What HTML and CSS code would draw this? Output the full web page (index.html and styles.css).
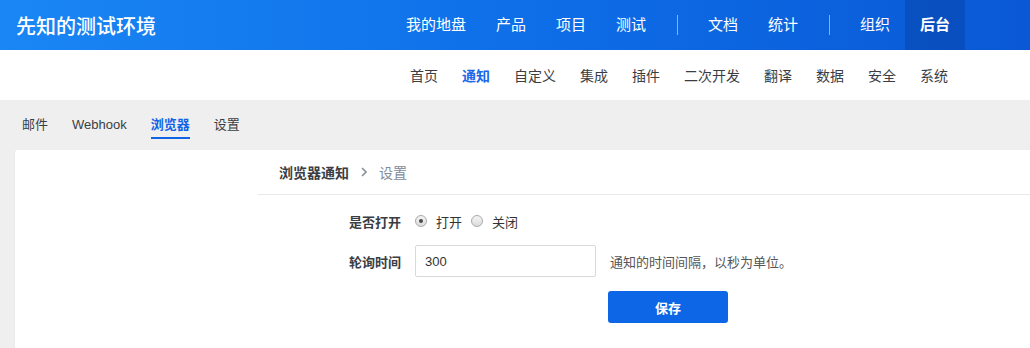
FILE: index.html
```html
<!DOCTYPE html>
<html lang="zh-CN">
<head>
    <meta charset="UTF-8">
    <meta name="viewport" content="width=device-width, initial-scale=1.0">
    <title>先知的测试环境 - 后台</title>
    <link rel="stylesheet" href="styles.css">
</head>
<body>
    <div class="header">
        <div class="brand">先知的测试环境</div>
        <div class="main-nav">
            <a class="nav-item">我的地盘</a>
            <a class="nav-item">产品</a>
            <a class="nav-item">项目</a>
            <a class="nav-item">测试</a>
            <span class="nav-divider"></span>
            <a class="nav-item">文档</a>
            <a class="nav-item">统计</a>
            <span class="nav-divider"></span>
            <a class="nav-item">组织</a>
            <a class="nav-item active">后台</a>
        </div>
    </div>

    <div class="sub-nav">
        <a>首页</a>
        <a class="active">通知</a>
        <a>自定义</a>
        <a>集成</a>
        <a>插件</a>
        <a>二次开发</a>
        <a>翻译</a>
        <a>数据</a>
        <a>安全</a>
        <a>系统</a>
    </div>

    <div class="main">
        <div class="tabs">
            <a class="tab">邮件</a>
            <a class="tab">Webhook</a>
            <a class="tab active">浏览器</a>
            <a class="tab">设置</a>
        </div>

        <div class="card">
            <div class="side"></div>
            <div class="content">
                <div class="breadcrumb">
                    <strong>浏览器通知</strong>
                    <svg class="chevron" width="6" height="10" viewBox="0 0 6 10">
                        <path d="M1 1 L5 5 L1 9" fill="none" stroke="#8a909c" stroke-width="1.6"/>
                    </svg>
                    <span class="crumb-current">设置</span>
                </div>

                <form class="settings-form">
                    <div class="form-row">
                        <label class="form-label">是否打开</label>
                        <div class="radio-group">
                            <label class="radio"><input type="radio" name="turnon" checked> 打开</label>
                            <label class="radio"><input type="radio" name="turnon"> 关闭</label>
                        </div>
                    </div>
                    <div class="form-row">
                        <label class="form-label" for="polling">轮询时间</label>
                        <div class="field">
                            <input type="text" id="polling" value="300">
                            <span class="help">通知的时间间隔，以秒为单位。</span>
                        </div>
                    </div>
                    <div class="form-row actions">
                        <span></span>
                        <button type="button" class="btn-save">保存</button>
                    </div>
                </form>
            </div>
        </div>
    </div>
</body>
</html>
```

FILE: styles.css
```css
body {
    margin: 0;
    font-family: "Liberation Sans", "Noto Sans CJK SC", sans-serif;
    font-size: 13px;
    color: #333;
    background-color: #efefef;
    overflow: hidden;
}

a {
    text-decoration: none;
    color: inherit;
    cursor: pointer;
}

.header {
    height: 50px;
    display: flex;
    align-items: center;
    background: linear-gradient(90deg, #1a86f4 0%, #0e6fe8 50%, #0a58d5 100%);
    color: white;
}

.brand {
    padding-left: 16px;
    font-size: 20px;
    font-weight: 500;
}

.main-nav {
    margin-left: auto;
    margin-right: 65px;
    display: flex;
    align-items: center;
    height: 50px;
}

.nav-item {
    padding: 0 15px;
    height: 50px;
    line-height: 50px;
    font-size: 15px;
}

.nav-item.active {
    background-color: rgba(0, 20, 80, 0.18);
    font-weight: bold;
}

.nav-divider {
    width: 1px;
    height: 20px;
    margin: 0 15px 0 16px;
    background-color: rgba(255, 255, 255, 0.5);
}

.sub-nav {
    height: 50px;
    background-color: white;
    display: flex;
    justify-content: flex-end;
    align-items: center;
    gap: 24px;
    padding-right: 82px;
    font-size: 14px;
    color: #3a3d44;
}

.sub-nav a.active {
    color: #1e66e8;
    font-weight: bold;
}

.main {
    padding-left: 15px;
}

.tabs {
    height: 50px;
    display: flex;
    align-items: flex-start;
    gap: 24px;
    padding-left: 7px;
    color: #3a3d44;
}

.tab {
    padding-top: 15px;
    padding-bottom: 2px;
    line-height: 20px;
    border-bottom: 2px solid transparent;
}

.tab.active {
    color: #1163e6;
    font-weight: bold;
    border-bottom-color: #1163e6;
}

.card {
    display: flex;
    height: 198px;
    background-color: white;
    border-radius: 3px 0 0 0;
    box-shadow: 0 1px 2px rgba(0, 0, 0, 0.08);
}

.side {
    width: 243px;
    flex-shrink: 0;
}

.content {
    flex: 1;
}

.breadcrumb {
    height: 44px;
    display: flex;
    align-items: center;
    padding-left: 21px;
    border-bottom: 1px solid #e9e9e9;
    font-size: 14px;
}

.breadcrumb strong {
    color: #3a3d44;
}

.chevron {
    margin: 0 12px;
}

.crumb-current {
    color: #838a97;
}

.settings-form {
    padding-top: 10px;
}

.form-row {
    display: grid;
    grid-template-columns: 143px 1fr;
    column-gap: 14px;
    align-items: center;
    min-height: 32px;
}

.form-row + .form-row {
    margin-top: 8px;
}

.form-row.actions {
    margin-top: 14px;
}

.form-label {
    text-align: right;
    font-weight: bold;
    color: #3a3d44;
}

.radio-group {
    display: flex;
    align-items: center;
    gap: 9px;
}

.radio {
    display: flex;
    align-items: center;
    gap: 9px;
    color: #333;
}

.radio input {
    appearance: none;
    -webkit-appearance: none;
    margin: 0;
    width: 12px;
    height: 12px;
    border: 1px solid #a9a9a9;
    border-radius: 50%;
    background: linear-gradient(#f4f4f4, #dcdcdc);
    box-sizing: border-box;
    position: relative;
}

.radio input:checked::after {
    content: "";
    position: absolute;
    left: 3px;
    top: 3px;
    width: 4px;
    height: 4px;
    border-radius: 50%;
    background-color: #4a4a4a;
}

.field {
    display: flex;
    align-items: center;
    gap: 14px;
}

.field input {
    width: 181px;
    height: 32px;
    padding: 0 9px;
    border: 1px solid #d9d9d9;
    border-radius: 2px;
    box-sizing: border-box;
    font-family: inherit;
    font-size: 13px;
    color: #333;
}

.help {
    color: #555;
}

.btn-save {
    margin-left: 193px;
    width: 120px;
    height: 32px;
    border: none;
    border-radius: 3px;
    background-color: #0c66e6;
    color: white;
    font-family: inherit;
    font-size: 13px;
    font-weight: bold;
    cursor: pointer;
}
```
